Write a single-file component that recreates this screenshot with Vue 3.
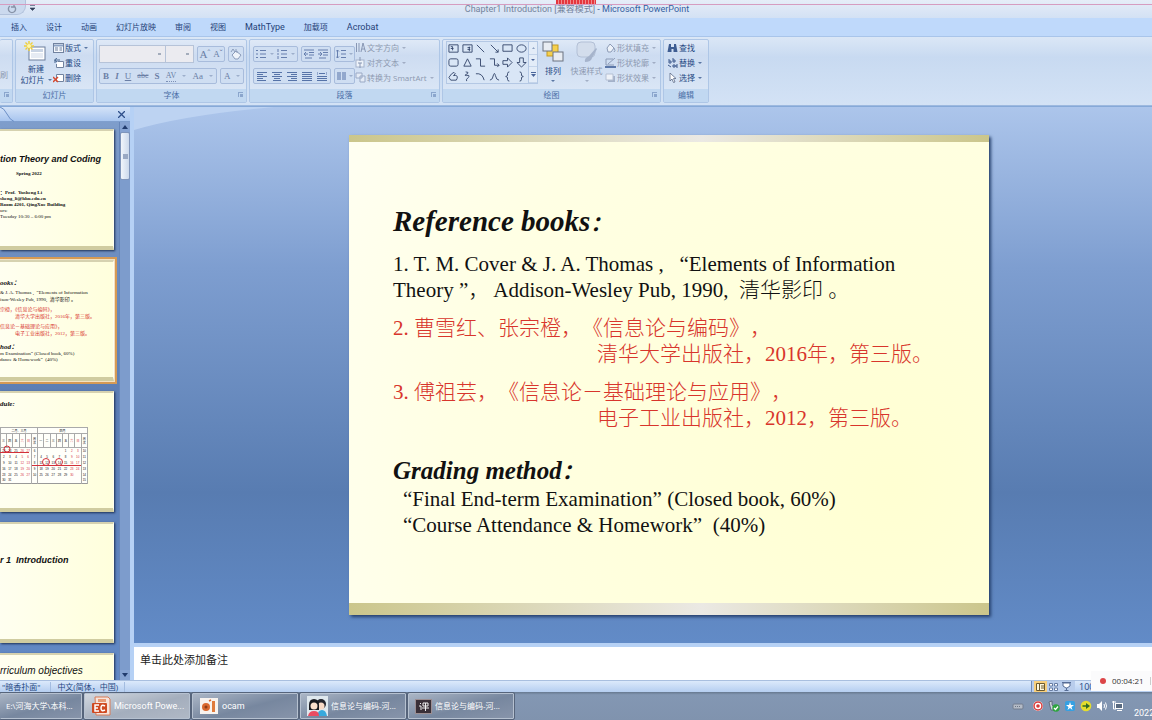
<script setup>
import { ref } from 'vue'

const tabs = ['插入', '设计', '动画', '幻灯片放映', '审阅', '视图', 'MathType', '加载项', 'Acrobat']

const shapes = [
  'M1 2H11V10H1Z M3 4h2 M3 6h3 M5 4v4',
  'M1 2H11V10H1Z M6 5h3 M6 7h3 M8 4v5',
  'M2 2L10 10',
  'M2 2L10 10 M10 7v3h-3',
  'M1 2H11V9H1Z',
  'M1 6a5 4 0 1 0 10 0a5 4 0 1 0 -10 0Z',
  'M3 2H9Q11 2 11 4V8Q11 10 9 10H3Q1 10 1 8V4Q1 2 3 2Z',
  'M6 2L10 10H2Z',
  'M1 2H6V10H11',
  'M1 2H6V9H11 M9 7l2 2l-2 2',
  'M1 4H6V1L11 6L6 11V8H1Z',
  'M4 1H8V6H11L6 11L1 6H4Z',
  'M3 10L1 7L4 3Q7 0 8 3L6 5Q11 4 10 8L9 10Z',
  'M4 1Q8 1 6 3Q1 5 5 5Q9 4 7 7Q4 9 5 11',
  'M1 3Q8 2 10 10',
  'M1 10Q4 10 5 4Q6 1 7 5Q8 10 11 10',
  'M8 1Q6 1 6 3V5L4 6L6 7V9Q6 11 8 11',
  'M4 1Q6 1 6 3V5L8 6L6 7V9Q6 11 4 11',
]

const weekdays = ['三', '四', '五', '六', '日', '周次', '一', '二', '三', '四', '五', '六', '日', '周次']
const weeks = [
  ['23', '24', '25', '26', '27', '6', '', '', '', '', '1', '2', '3', '10'],
  ['2', '3', '4', '5', '6', '7', '4', '5', '6', '7', '8', '9', '10', '11'],
  ['9', '10', '11', '12', '13', '8', '11', '12', '13', '14', '15', '16', '17', '12'],
  ['16', '17', '18', '19', '20', '9', '18', '19', '20', '21', '22', '23', '24', '13'],
  ['23', '24', '25', '26', '27', '10', '25', '26', '27', '28', '29', '30', '', '14'],
  ['30', '31', '', '', '', '', '', '', '', '', '', '', '', '15'],
]
const restDays = [3, 4, 11, 12]

const notes = ref('')
const fontName = ref('')
const fontSize = ref('')
</script>

<template>
  <div class="screen">
    <header class="titlebar">
      <div class="quick">
        <button aria-label="重复"><svg width="10" height="10" viewBox="0 0 10 10"><path d="M3 2A3.6 3.6 0 1 0 7 2M7 0V3H4" fill="none" stroke="#8793a8" stroke-width="1.4" /></svg></button>
      </div>
      <button class="quick-more" aria-label="自定义快速访问工具栏"><svg width="5" height="6" viewBox="0 0 5 6"><path d="M0 .5H5M0 3H5L2.500 5.500Z" stroke="#33415c" stroke-width=".6" fill="#33415c" /></svg></button>
      <div class="caption"><span>Chapter1 Introduction [<small>兼容模式</small>]</span> - Microsoft PowerPoint</div>
      <i class="capture-grip"></i>
    </header>

    <nav class="tabs">
      <button v-for="t in tabs" :key="t" :class="{ latin: /^[A-Z]/.test(t) }">{{ t }}</button>
    </nav>

    <div class="ribbon">
      <section class="group g-clip">
        <div class="body"><span class="dim">刷</span></div>
        <footer><i class="launch"></i></footer>
      </section>

      <section class="group g-slides">
        <div class="body">
          <button class="big">
            <svg width="24" height="22" viewBox="0 0 24 22">
              <rect x="5" y="6" width="16" height="13" fill="#fff" stroke="#6d7f9c" />
              <rect x="7" y="8" width="12" height="3" fill="#c9d4e4" />
              <rect x="7" y="12" width="12" height="5" fill="#e6ebf3" />
              <path d="M5 0V10M0 5H10M1.500 1.500L8.500 8.500M8.500 1.500L1.500 8.500" stroke="#f0cf38" stroke-width="1.400" />
              <circle cx="5" cy="5" r="2" fill="#fff7a8" />
            </svg>
            <span>新建</span><span>幻灯片<i class="arrow"></i></span>
          </button>
          <div class="stack">
            <button><svg width="11" height="10" viewBox="0 0 11 10"><rect x=".5" y=".5" width="10" height="9" fill="#f4f7fc" stroke="#71829f" /><path d="M1 2.500H10" stroke="#8ca2c4" stroke-width="2" /><path d="M2 5H5M2 7H5M6.500 5H9M6.500 7H9" stroke="#71829f" /></svg>版式<i class="arrow"></i></button>
            <button><svg width="11" height="10" viewBox="0 0 11 10"><path d="M4.500 3.500H10.500V9.500H3.500V6" fill="#fff" stroke="#71829f" /><path d="M2 5V2H7M4 0L1.500 2L4 4" fill="none" stroke="#47658f" /></svg>重设</button>
            <button><svg width="11" height="10" viewBox="0 0 11 10"><path d="M3.500 1.500H10.500V8.500H3.500Z" fill="#fff" stroke="#71829f" /><path d="M0 4L5 9M5 4L0 9" stroke="#d8472c" stroke-width="1.500" /></svg>删除</button>
          </div>
        </div>
        <footer>幻灯片</footer>
      </section>

      <section class="group g-font">
        <div class="body col">
          <div class="row top">
            <div class="combos">
              <select v-model="fontName" class="combo wide" aria-label="字体"><option value=""></option></select>
              <select v-model="fontSize" class="combo" aria-label="字号"><option value=""></option></select>
            </div>
            <div class="box b30"><button class="serif large">A<sup>ˆ</sup></button><button class="serif">A<sup>ˇ</sup></button></div>
            <div class="box b17"><button aria-label="清除格式"><svg width="12" height="12" viewBox="0 0 12 12"><path d="M2 7L6 3L11 7L8 11H5Z" fill="#eef3fa" stroke="#8b9cba" /><path d="M1 4L3 1L5 4M6 1V4H8" fill="none" stroke="#8b9cba" /></svg></button></div>
          </div>
          <div class="row">
            <div class="box b120">
              <button class="serif"><b>B</b></button><button class="serif"><b><i>I</i></b></button><button class="serif"><u>U</u></button><button class="serif small"><s>abc</s></button><button class="serif"><b>S</b></button><button class="serif small under">AV</button><i class="arrow"></i><button class="serif">Aa</button><i class="arrow"></i>
            </div>
            <div class="box b24"><button class="serif">A</button><i class="arrow"></i></div>
          </div>
        </div>
        <footer>字体<i class="launch"></i></footer>
      </section>

      <section class="group g-para">
        <div class="body">
          <div class="col">
            <div class="row top">
              <div class="box b45">
                <button aria-label="项目符号"><svg width="10" height="10" viewBox="0 0 10 10"><path d="M0 1.500H2M0 5H2M0 8.500H2M4 1.500H10M4 5H10M4 8.500H10" stroke="#667fae" /></svg></button><i class="arrow"></i>
                <button aria-label="编号"><svg width="10" height="10" viewBox="0 0 10 10"><path d="M1 0V3M1 4V6M1 7V10M4 1.500H10M4 5H10M4 8.500H10" stroke="#667fae" /></svg></button><i class="arrow"></i>
              </div>
              <div class="box b30">
                <button aria-label="减少缩进"><svg width="10" height="10" viewBox="0 0 10 10"><path d="M0 1H10M5 3.500H10M5 6H10M1 9H8M4 5H0M2 3L0 5L2 7" stroke="#667fae" fill="none" /></svg></button>
                <button aria-label="增加缩进"><svg width="10" height="10" viewBox="0 0 10 10"><path d="M0 1H10M5 3.500H10M5 6H10M1 9H8M0 5H4M2 3L4 5L2 7" stroke="#667fae" fill="none" /></svg></button>
              </div>
              <div class="box b21"><button aria-label="行距"><svg width="10" height="10" viewBox="0 0 10 10"><path d="M1.500 1V9M0 2.500L1.500 1L3 2.500M0 7.500L1.500 9L3 7.500M5 1.500H10M5 5H10M5 8.500H10" stroke="#667fae" fill="none" /></svg></button><i class="arrow"></i></div>
            </div>
            <div class="row">
              <div class="box b78">
                <button aria-label="左对齐"><svg width="10" height="9" viewBox="0 0 10 9"><path d="M0 .5H10M0 2.500H6M0 4.500H10M0 6.500H6M0 8.500H9" stroke="#5673a8" /></svg></button>
                <button aria-label="居中"><svg width="10" height="9" viewBox="0 0 10 9"><path d="M0 .5H10M2 2.500H8M0 4.500H10M2 6.500H8M1 8.500H9" stroke="#5673a8" /></svg></button>
                <button aria-label="右对齐"><svg width="10" height="9" viewBox="0 0 10 9"><path d="M0 .5H10M4 2.500H10M0 4.500H10M4 6.500H10M1 8.500H10" stroke="#5673a8" /></svg></button>
                <button aria-label="两端对齐"><svg width="10" height="9" viewBox="0 0 10 9"><path d="M0 .5H10M0 2.500H10M0 4.500H10M0 6.500H10M0 8.500H10" stroke="#5673a8" /></svg></button>
                <button aria-label="分散对齐"><svg width="10" height="9" viewBox="0 0 10 9"><path d="M0 0V3M10 0V3M2 1.500H8M0 4.500H10M0 6.500H10M0 8.500H10" stroke="#5673a8" /></svg></button>
              </div>
              <div class="box b21"><button aria-label="分栏"><svg width="9" height="9" viewBox="0 0 9 9"><path d="M0 1H4M0 3H4M0 5H4M0 7H4M5 1H9M5 3H9M5 5H9M5 7H9" stroke="#5673a8" /></svg></button><i class="arrow"></i></div>
            </div>
          </div>
          <div class="stack dim">
            <button><svg width="11" height="11" viewBox="0 0 11 11"><path d="M1.500 1V10M4 1V10M6 10L8 1L10.500 10M7 7H10" fill="none" stroke="#8796b3" /></svg>文字方向<i class="arrow"></i></button>
            <button><svg width="11" height="11" viewBox="0 0 11 11"><rect x="1" y="3" width="8" height="7" fill="#eef3fa" stroke="#a5b3cc" /><path d="M5 0V4M5 6V11M3 6H7" stroke="#8796b3" /></svg>对齐文本<i class="arrow"></i></button>
            <button><svg width="11" height="11" viewBox="0 0 11 11"><path d="M1 1H7V6H1ZM5 4H10V10H5Z" fill="#e4ebf6" stroke="#9aa9c5" /></svg><span>转换为 SmartArt</span><i class="arrow"></i></button>
          </div>
        </div>
        <footer>段落<i class="launch"></i></footer>
      </section>

      <section class="group g-draw">
        <div class="body">
          <div class="gallery">
            <div class="cells">
              <button v-for="(d, i) in shapes" :key="i" :aria-label="'形状 ' + (i + 1)">
                <svg width="11" height="11" viewBox="0 0 12 12"><path :d="d" fill="none" stroke="#34466b" /></svg>
              </button>
            </div>
            <div class="gscroll"><button aria-label="上一行"><svg width="3" height="2" viewBox="0 0 4 2"><path d="M2 0L4 2H0Z" fill="#7088b0" /></svg></button><button aria-label="下一行"><svg width="4" height="2" viewBox="0 0 4 2"><path d="M0 0H4L2 2Z" fill="#4a659a" /></svg></button><button aria-label="更多"><svg width="5" height="5" viewBox="0 0 5 5"><path d="M0 .5H5" stroke="#4a659a" /><path d="M0 2H5L2.500 5Z" fill="#4a659a" /></svg></button></div>
          </div>
          <button class="big arrange">
            <svg width="22" height="22" viewBox="0 0 22 22"><rect x="5" y="4" width="11" height="11" fill="#f6d04c" stroke="#c49a22" /><rect x="1" y="1" width="9" height="9" fill="#e8ecf2" stroke="#6b7280" /><rect x="11" y="11" width="10" height="9" fill="#e8ecf2" stroke="#6b7280" /></svg>
            <span>排列</span><i class="arrow"></i>
          </button>
          <button class="big dim styles">
            <svg width="22" height="22" viewBox="0 0 22 22"><rect x="1" y="1" width="18" height="15" rx="4" fill="#d3ddec" stroke="#b3c0d6" /><path d="M20 7L13 15Q8 17 9 21Q15 21 16 17L21 8Z" fill="#a6b4cc" /></svg>
            <span>快速样式</span><i class="arrow"></i>
          </button>
          <div class="stack dim">
            <button><svg width="11" height="10" viewBox="0 0 11 10"><path d="M2 5L5 1L9 5L6 9H3Z" fill="#edf2f9" stroke="#8c9bb6" /><path d="M9 5Q11 8 9 9" fill="none" stroke="#8c9bb6" /></svg>形状填充<i class="arrow"></i></button>
            <button><svg width="11" height="10" viewBox="0 0 11 10"><path d="M8 1H1V7H9M3 6L10 0" fill="none" stroke="#8c9bb6" /><path d="M0 9H11" stroke="#5c78a9" stroke-width="2" /></svg>形状轮廓<i class="arrow"></i></button>
            <button><svg width="11" height="10" viewBox="0 0 11 10"><path d="M3 3H10V9H3Z" fill="#a3b1c9" /><path d="M1 1H8V7H1Z" fill="#eef2f8" stroke="#b5c0d3" /></svg>形状效果<i class="arrow"></i></button>
          </div>
        </div>
        <footer>绘图<i class="launch"></i></footer>
      </section>

      <section class="group g-edit">
        <div class="body">
          <div class="stack">
            <button><svg width="11" height="10" viewBox="0 0 11 10"><path d="M2 1H4V4H7V1H9L10.500 9H6.500V6H4.500V9H.5Z" fill="#3f5d92" /></svg>查找</button>
            <button><svg width="11" height="10" viewBox="0 0 11 10"><path d="M2 1V5H4V3H2M6 0V4H8V2H6M6 7H8V9H6ZM9 7H11M9 7V9H11M1 7L4 9" fill="none" stroke="#3d588c" /></svg>替换<i class="arrow"></i></button>
            <button><svg width="11" height="10" viewBox="0 0 11 10"><path d="M3 0V8L5 6L6.500 9.500L8 9L6.500 5.500H9Z" fill="#fff" stroke="#5a6a88" stroke-width=".8" /></svg>选择<i class="arrow"></i></button>
          </div>
        </div>
        <footer>编辑</footer>
      </section>
    </div>

    <main class="work">
      <aside class="panel">
        <div class="panel-head">
          <svg width="14" height="15" viewBox="0 0 14 15"><path d="M0 0Q4 1 7 7T14 14.500" fill="none" stroke="#6c8fc6" /></svg>
          <button aria-label="关闭"><svg width="7" height="7" viewBox="0 0 7 7"><path d="M0 0L7 7M7 0L0 7" stroke="#2f4f8a" stroke-width="1.300" /></svg></button>
        </div>
        <div class="panel-body">
          <div class="thumbs">
            <article class="thumb t1">
              <h3>tion Theory and Coding</h3>
              <p class="term">Spring 2022</p>
              <p><b>：Prof.&nbsp; Yusheng Li</b></p>
              <p><b>sheng_li@hhu.edu.cn</b></p>
              <p><b>Room 4201, QingXue Building</b></p>
              <p>urs:</p>
              <p>Tuesday 10:30 – 6:00 pm</p>
            </article>
            <article class="thumb t2 current">
              <h4>ooks：</h4>
              <p>&amp; J. A. Thomas ,&nbsp; “Elements of Information</p>
              <p>ison-Wesley Pub, 1990,&nbsp; 清华影印 。</p>
              <p class="red gap">宗橙，《信息论与编码》，</p>
              <p class="red in">清华大学出版社，2016年，第三版。</p>
              <p class="red gap">信息论－基础理论与应用》，</p>
              <p class="red in">电子工业出版社，2012，第三版。</p>
              <h4 class="second">hod：</h4>
              <p class="tight">m Examination” (Closed book, 60%)</p>
              <p class="tight">dance &amp; Homework”&nbsp; (40%)</p>
            </article>
            <article class="thumb t3">
              <h4>dule:</h4>
              <div class="cal">
                <table>
                  <thead>
                    <tr class="months"><th colspan="6">二月、三月</th><th colspan="8">四月</th></tr>
                    <tr class="days"><th v-for="(d, i) in weekdays" :key="i" :class="{ rest: restDays.includes(i), wk: d === '周次' }">{{ d }}</th></tr>
                  </thead>
                  <tbody>
                    <tr v-for="(w, r) in weeks" :key="r"><td v-for="(d, i) in w" :key="i" :class="{ rest: restDays.includes(i), wk: i === 5 || i === 13 }">{{ d }}</td></tr>
                  </tbody>
                </table>
                <svg class="marks" width="88" height="57" viewBox="0 0 88 57"><g fill="none" stroke="#d3303a"><circle cx="7" cy="22" r="3" /><circle cx="46" cy="35" r="3.500" /><circle cx="59" cy="35" r="3.500" /><path d="M0 25.500H29M32 38.500H81" /></g></svg>
              </div>
            </article>
            <article class="thumb t4"><h3>r 1&nbsp; Introduction</h3></article>
            <article class="thumb t5"><h3>rriculum objectives</h3></article>
          </div>
          <div class="scroll">
            <button aria-label="向上滚动"><svg width="6" height="4" viewBox="0 0 6 4"><path d="M3 0L6 4H0Z" fill="#213b6d" /></svg></button>
            <i class="knob"></i>
            <button class="down" aria-label="向下滚动"><svg width="6" height="4" viewBox="0 0 6 4"><path d="M0 0H6L3 4Z" fill="#213b6d" /></svg></button>
          </div>
        </div>
      </aside>

      <div class="editor">
        <div class="canvas">
          <svg class="swoosh" width="140" height="24" viewBox="0 0 140 24"><path d="M0 0H140Q50 8 0 23Z" fill="#bdd3f2" /></svg>
          <article class="slide">
            <h1>Reference books<span>：</span></h1>
            <p class="book">1. T. M. Cover &amp; J. A. Thomas ,&nbsp;&nbsp; “Elements of Information<br>Theory ”， Addison-Wesley Pub, 1990,&nbsp; 清华影印 。</p>
            <p class="book red">2. 曹雪红、张宗橙，《信息论与编码》，<br><span class="pub">清华大学出版社，2016年，第三版。</span></p>
            <p class="book red">3. 傅祖芸，《信息论－基础理论与应用》，<br><span class="pub">电子工业出版社，2012，第三版。</span></p>
            <h2>Grading method<span>：</span></h2>
            <p class="grade">“Final End-term Examination” (Closed book, 60%)<br>“Course Attendance &amp; Homework”&nbsp; (40%)</p>
          </article>
        </div>
        <textarea v-model="notes" class="notes" placeholder="单击此处添加备注" aria-label="备注"></textarea>
      </div>
    </main>

    <footer class="status">
      <span class="cell theme">"暗香扑面"</span>
      <span class="cell">中文(简体，中国)</span>
      <div class="views">
        <button class="on" aria-label="普通视图"><svg width="9" height="8" viewBox="0 0 9 8"><path d="M.5.5H8.500V7.500H.5ZM3.500 0V8M5 3H8M5 5H8" fill="#fff8dc" stroke="#6c5a2e" /></svg></button>
        <button aria-label="幻灯片浏览"><svg width="9" height="8" viewBox="0 0 9 8"><path d="M.5.5H3.500V3H.5ZM5.500.5H8.500V3H5.500ZM.5 5H3.500V7.500H.5ZM5.500 5H8.500V7.500H5.500Z" fill="#fff" stroke="#667ca3" /></svg></button>
        <button aria-label="幻灯片放映"><svg width="9" height="9" viewBox="0 0 9 9"><path d="M0 .5H9M1 1H8V4L5 6H4L1 4ZM4.500 6V8M2.500 8.500H6.500" fill="#fff" stroke="#566d96" /></svg></button>
      </div>
      <span class="zoom">100%</span>
    </footer>

    <footer class="taskbar">
      <button class="task first">E:\河海大学\本科...</button>
      <button class="task active"><svg width="20" height="20" viewBox="0 0 20 20"><path d="M4 1H17L19 3V19H5Z" fill="#f7e4dc" stroke="#d97b55" /><path d="M7 3H15V6H7Z" fill="#e79a76" /><rect x="1" y="7" width="15" height="10" rx="1" fill="#cf4a22" /><path d="M8 9H4V15H8M4 12H7M14 10Q10 8 10 12T14 14" fill="none" stroke="#fff" stroke-width="1.500" /></svg><span class="lat">Microsoft Powe...</span></button>
      <button class="task"><svg width="20" height="18" viewBox="0 0 20 18"><rect x="1" y="1" width="18" height="16" fill="#f8f3ef" /><circle cx="7" cy="10" r="4" fill="#d9682f" /><circle cx="7" cy="10" r="1.500" fill="#8e3c18" /><path d="M10 4L12 3" stroke="#d9682f" stroke-width="1.500" /><rect x="13" y="4" width="3" height="11" fill="#e07b3c" /></svg><span class="lat">ocam</span></button>
      <button class="task"><svg width="21" height="20" viewBox="0 0 21 20"><rect width="21" height="20" fill="#dfe8ee" /><circle cx="14" cy="8" r="5" fill="#23242c" /><circle cx="14" cy="10" r="3.500" fill="#f8d9c5" /><path d="M10 20Q11 14 15 14T20 20Z" fill="#38a9dc" /><path d="M2 14V9Q2 3 7 3T12 9V14Z" fill="#191a20" /><circle cx="7" cy="10" r="3.500" fill="#fbe0cd" /><path d="M1 20Q2 15 7 15T12 20Z" fill="#ea4d62" /></svg><span>信息论与编码-河...</span></button>
      <button class="task"><svg width="17" height="15" viewBox="0 0 17 15"><rect x=".5" y=".5" width="16" height="14" fill="#3a3038" stroke="#9c8e92" /><path d="M5 4L6 5M4 7H6V11M8 4H13V7H8ZM7 9H14M10.500 4V12" fill="none" stroke="#eee" /></svg><span>信息论与编码-河...</span></button>

      <div class="tray">
        <svg width="12" height="12" viewBox="0 0 12 12"><rect x="1" y="4" width="10" height="5" rx="1" fill="#b4bbc6" stroke="#737d8e" /><path d="M3 6.500H9" stroke="#6c7686" stroke-dasharray="1 1" /></svg>
        <span class="gap"></span>
        <svg width="12" height="12" viewBox="0 0 12 12"><circle cx="6" cy="6" r="5" fill="#fff" /><circle cx="6" cy="6" r="4" fill="none" stroke="#d83a3a" stroke-width="1.500" /><circle cx="6" cy="6" r="1.800" fill="#d83a3a" /></svg>
        <svg width="12" height="12" viewBox="0 0 12 12"><path d="M1 2L4 1V5L6 7V10H3Z" fill="#cdd3dc" stroke="#4a5361" stroke-width=".7" /><circle cx="8" cy="8" r="3.700" fill="#2fa440" /><path d="M6 8L7.500 9.500L10 6.500" fill="none" stroke="#fff" stroke-width="1.200" /></svg>
        <svg width="12" height="12" viewBox="0 0 12 12"><rect x="1" y="1" width="10" height="10" rx="2" fill="#35a0e2" /><path d="M6 2L7 5L10 5L7.500 7L8.500 10L6 8L3.500 10L4.500 7L2 5L5 5Z" fill="#fff" /></svg>
        <svg width="12" height="12" viewBox="0 0 12 12"><circle cx="6" cy="6" r="5.300" fill="#e4dd2d" /><path d="M2.500 6H8" stroke="#2f6a26" stroke-width="1.500" /><path d="M6 3L10 6L6 9Z" fill="#2f6a26" /></svg>
        <svg width="12" height="12" viewBox="0 0 12 12"><path d="M1 4H3L6 1V11L3 8H1Z" fill="#fff" /><path d="M8 4Q9 6 8 8M9.500 2.500Q11.500 6 9.500 9.500" fill="none" stroke="#fff" /></svg>
        <svg width="12" height="12" viewBox="0 0 12 12"><rect x="3.500" y="3.500" width="7" height="5" fill="#596a80" stroke="#fff" /><path d="M1.500 1V5M0 2H4M5 10.500H10M1.500 5V9H4" stroke="#fff" fill="none" /></svg>
      </div>
      <div class="clock">2022</div>
    </footer>

    <div class="recorder"><i></i><time>00:04:21</time><b></b></div>
  </div>
</template>

<style>
html, body { height: 100%; overflow: hidden; }
</style>

<style scoped>
* { box-sizing: border-box; }
.screen {
  height: 100vh; display: flex; flex-direction: column; overflow: hidden; position: relative;
  font: 8px/10px "Open Sans", "Noto Sans CJK SC", sans-serif; color: #254882; background: #c3d8f5;
}
button { font: inherit; color: inherit; border: 0; background: none; padding: 0; display: flex; align-items: center; white-space: nowrap; }
svg { flex: none; display: block; }
h1, h2, h3, h4, p { margin: 0; font-weight: normal; }

.titlebar { height: 18px; flex: none; display: flex; position: relative; background: linear-gradient(#e6edf8, #d3e1f4); }
.titlebar::after { content: ""; position: absolute; left: 0; right: 0; top: 4px; height: 1px; background: #d69cc0; }
.quick { width: 26px; height: 15px; padding: 4px 0 0 7px; background: #cbd9ee; border: 1px solid #b2c2dc; border-width: 0 1px 1px 0; border-radius: 0 0 9px 0; }
.quick-more { width: 12px; justify-content: center; height: 16px; }
.caption { flex: 1; text-align: center; font: 9px/18px Roboto, "Noto Sans CJK SC", sans-serif; color: #35609f; padding-right: 36px; }
.caption span { color: #74839c; }
.caption small { font-size: 9px; }
.capture-grip { position: absolute; left: 50%; top: 0; width: 40px; height: 4px; margin-left: -20px; background: repeating-linear-gradient(90deg, #e5363d 0 2px, #f08a8c 2px 3px); }

.tabs { height: 18px; flex: none; display: flex; gap: 19px; padding-left: 11px; background: #bfd9fb; color: #1f4278; }
.tabs .latin { font-family: Roboto, sans-serif; font-size: 9px; }

.ribbon { height: 70px; flex: none; display: flex; gap: 2px; padding: 2px 0; background: linear-gradient(#dbe7f6, #c8daf1 30%, #d3e2f5); border-bottom: 1px solid #9db9df; border-top: 1px solid #a9c5ea; }
.group { display: flex; flex-direction: column; border: 1px solid #aec6e6; border-radius: 2px; background: linear-gradient(#dfe9f7, #cddcf1 25%, #dee9f7); }
.group > footer { height: 13px; flex: none; line-height: 11px; text-align: center; background: #c1d8f1; color: #4b6ea6; position: relative; }
.body { flex: 1; display: flex; padding: 0 3px; min-height: 0; }
.col { display: flex; flex-direction: column; }
.launch { position: absolute; right: 3px; top: 3px; width: 5px; height: 5px; border: 1px solid #8ba6cd; border-width: 1px 0 0 1px; }
.launch::after { content: ""; position: absolute; right: 0; bottom: 0; width: 3px; height: 3px; background: #8ba6cd; }
.g-clip { width: 13px; border-left: 0; }
.g-clip .body { padding: 30px 0 0; }
.g-slides { width: 79px; }
.g-font { width: 151px; }
.g-para { width: 191px; }
.g-draw { width: 219px; }
.g-edit { width: 46px; }
.dim { color: #8d99b0; }
.arrow { width: 0; height: 0; border: 2px solid transparent; border-top-color: currentColor; border-bottom: 0; margin-left: 3px; opacity: .7; flex: none; }
.big { flex-direction: column; width: 34px; padding-top: 1px; line-height: 11px; }
.big span { display: flex; align-items: center; }
.big svg { margin-bottom: 2px; }
.g-slides .big svg { margin-bottom: 0; }
.big > .arrow { margin: 4px 0 0; }
.stack { display: flex; flex-direction: column; font-size: 8px; }
.stack button { height: 15px; gap: 1px; }
.stack .arrow { margin-left: 2px; }
.row { display: flex; gap: 3px; height: 16px; }
.row.top { height: 19px; margin: 4px 0 5px; align-items: center; }
.g-para .row.top { height: 16px; margin: 6px 0; }
.box { height: 16px; display: flex; align-items: center; justify-content: space-around; border: 1px solid #a8bcdc; border-radius: 2px; background: #cfdef2; color: #6b7fa6; }
.box .arrow { margin: 0; opacity: .5; }
.b17 { width: 17px; } .b21 { width: 21px; } .b24 { width: 24px; } .b30 { width: 30px; } .b45 { width: 45px; } .b78 { width: 78px; } .b120 { width: 119px; }
.g-para .col { width: 102px; }
.g-font .body { padding: 0 2px; }
.serif { font: 9px/10px "Liberation Serif", serif; }
.serif.large { font-size: 11px; }
.serif.small { font-size: 8px; }
.serif sup { font-size: 8px; line-height: 8px; }
.under { border-bottom: 1px dotted #7c8fb5; }
.combos { display: flex; }
.combo { appearance: none; width: 28px; height: 18px; border: 1px solid #b6c3d8; border-left-width: 0; border-radius: 0; padding: 0; background: linear-gradient(#a3acbb, #a3acbb) right 4px center / 3px 2px no-repeat, #ebebf0; }
.combo.wide { width: 67px; border-left-width: 1px; }
.gallery { display: flex; width: 92px; height: 43px; margin-top: 1px; border: 1px solid #b4c8e4; background: #d9e6f6; }
.cells { flex: 1; display: grid; grid-template-columns: repeat(6, 1fr); }
.cells button { justify-content: center; }
.gscroll { width: 9px; display: grid; border-left: 1px solid #b4c8e4; background: #e3ecf8; }
.gscroll button { justify-content: center; border-bottom: 1px solid #c4d4ea; }
.arrange { width: 30px; }
.g-draw .styles { width: 37px; }

.work { flex: 1; min-height: 0; display: flex; border-top: 1px solid #86a9d8; }
.panel { width: 134px; flex: none; display: flex; flex-direction: column; border-right: 4px solid #b6d1f5; }
.panel-head { height: 15px; flex: none; display: flex; justify-content: space-between; align-items: center; padding-right: 5px; background: linear-gradient(#d4e3f8, #a8c5ef); border-bottom: 1px solid #7f9fce; }
.panel-body { flex: 1; min-height: 0; display: flex; background: linear-gradient(#7e9dcb, #5b7db4 50%, #6289c5); }
.thumbs { flex: 1; min-width: 0; overflow: hidden; display: flex; flex-direction: column; gap: 10px; padding: 7px 5px 0 0; }
.thumb { height: 121px; flex: none; overflow: hidden; color: #111; background: linear-gradient(90deg, #fffff0, #ffffdc); border-top: 2px solid #d6d2b0; border-bottom: 4px solid #d0cca0; border-right: 1px solid #fffff0; box-shadow: 1px 1px 2px #1d3157; white-space: nowrap; font: 5px/6px "Liberation Serif", "Noto Sans CJK SC", serif; }
.thumb h3 { font: italic bold 9px/12px "Liberation Sans", sans-serif; }
.thumb h4 { font: italic bold 7px/8px "Liberation Serif", "Noto Sans CJK SC", serif; }
.thumb.current { box-shadow: 0 0 0 1px #f3e2c2, 0 0 0 3px #d59a55; }
.t1 h3 { padding-top: 22px; }
.t1 .term { padding: 6px 0 13px 16px; font-weight: bold; }
.t2 { line-height: 7px; }
.t2 h4 { padding: 17px 0 0; height: 27px; }
.t2 .gap { margin-top: 3px; }
.t2 .in { padding-left: 15px; }
.t2 .second { padding: 6px 0 0; height: 14px; }
.t2 .tight { line-height: 6px; }
.red { color: #d8352c; }
.t3 h4 { padding-top: 7px; }
.cal { position: relative; width: 88px; margin-top: 19px; }
.cal table { width: 88px; border-collapse: collapse; table-layout: fixed; font: 3px/4px "Liberation Sans", "Noto Sans CJK SC", sans-serif; border: 1px solid #999; background: #fffffa; }
.cal th, .cal td { padding: 0; font-weight: normal; text-align: center; height: 6px; overflow: hidden; }
.cal .days th { height: 14px; border: 1px solid #aaa; white-space: normal; }
.cal .wk { border: 1px solid #aaa; border-width: 0 1px; }
.cal .months th { border: 1px solid #aaa; }
.rest { color: #d3303a; }
.marks { position: absolute; left: 0; top: 0; }
.t4 h3 { padding-top: 30px; }
.t5 h3 { padding-top: 10px; font-weight: normal; font-size: 10px; }
.scroll { width: 11px; display: flex; flex-direction: column; align-items: stretch; background: #7d9ccc; border-left: 1px solid #6686ba; }
.scroll button { height: 10px; justify-content: center; background: #86a3d2; }
.scroll .knob { height: 48px; border: 1px solid #7f95bb; border-radius: 2px; background: linear-gradient(#9aa9c4, #9aa9c4) center / 5px 5px no-repeat, linear-gradient(90deg, #f1f5fb, #ccd9ec); }
.scroll .down { margin-top: auto; }

.editor { flex: 1; min-width: 0; display: flex; flex-direction: column; }
.canvas { flex: 1; min-height: 0; position: relative; display: flex; align-items: center; justify-content: center; padding-left: 52px; background: linear-gradient(#acc5eb, #7e9ed0 30%, #587cb1 72%, #628bc7); }
.swoosh { position: absolute; left: 0; top: 0; }
.slide { position: relative; width: 640px; height: 480px; padding: 61px 20px 0 44px; color: #111; border-top: 7px solid; border-bottom: 12px solid; border-image: linear-gradient(90deg, #cbc68b, #ebe9e4 55%, #cbc68b) 7 0 12; background: radial-gradient(circle at 85% 75%, #ffffd2, #ffffe4 70%, #fffff2); box-shadow: 2px 2px 3px #26406d; font: 300 21px/26px "Liberation Serif", "Noto Sans CJK SC", serif; text-spacing-trim: space-all; white-space: nowrap; }
.slide p { font-weight: 300; }
.slide h1 { font: italic bold 29px/36px "Liberation Serif", "Noto Sans CJK SC", serif; margin-bottom: 12px; }
.slide h1 span, .slide h2 span { font-size: 21px; line-height: 21px; }
.book { margin-bottom: 12px; }
.pub { padding-left: 204px; }
.slide h2 { font: italic bold 25px/30px "Liberation Serif", "Noto Sans CJK SC", serif; margin-top: 25px; }
.grade { padding-left: 10px; }
.notes { height: 37px; flex: none; border: 0; border-top: 4px solid #b6d1f5; padding: 4px 6px; margin: 0; width: 100%; resize: none; outline: 0; background: #fff; font: 11px/16px "Noto Sans CJK SC", sans-serif; color: #222; }
.notes::placeholder { color: #222; opacity: 1; }

.status { height: 12px; flex: none; display: flex; align-items: center; background: linear-gradient(#dce9fb, #b5cef0); border-top: 1px solid #a9bfdf; }
.cell { padding: 0 6px; border-right: 1px solid #a3bce0; }
.cell.theme { padding: 0 10px 0 2px; }
.views { margin-left: auto; display: flex; height: 11px; padding: 0 2px; border-left: 1px solid #6f8cba; background: #b9cdec; }
.views button { width: 13px; justify-content: center; }
.views .on { background: #f8cf7c; }
.zoom { width: 77px; padding-left: 4px; font-size: 9px; }

.taskbar { height: 28px; flex: none; display: flex; gap: 2px; padding: 1px 0; background: linear-gradient(#66788f, #8397b3 10%, #8093ae); color: #fff; }
.task { width: 106px; gap: 3px; padding-left: 6px; border: 1px solid #b6c1d0; outline: 1px solid #56647b; border-radius: 1px; background: linear-gradient(165deg, #aab5c5, #77879f 55%, #8794aa); }
.task.first { width: 82px; border-left: 0; }
.task.active { background: linear-gradient(165deg, #d2d8e0, #a4aebd 55%, #b0b8c5); }
.task .lat { font: 9px/12px Roboto, sans-serif; }
.tray { margin-left: auto; display: flex; gap: 4px; align-items: center; }
.tray .gap { width: 0; }
.clock { width: 26px; padding: 15px 0 0 8px; font: 9px/10px Roboto, sans-serif; }
.recorder { position: absolute; right: 0; bottom: 29px; width: 61px; height: 20px; display: flex; align-items: center; gap: 6px; padding-left: 9px; background: #fbfbfc; color: #333; font-size: 8px; }
.recorder i { width: 6px; height: 6px; border-radius: 50%; background: #dc4548; }
.recorder b { width: 1px; height: 8px; background: #ccc; }
</style>
